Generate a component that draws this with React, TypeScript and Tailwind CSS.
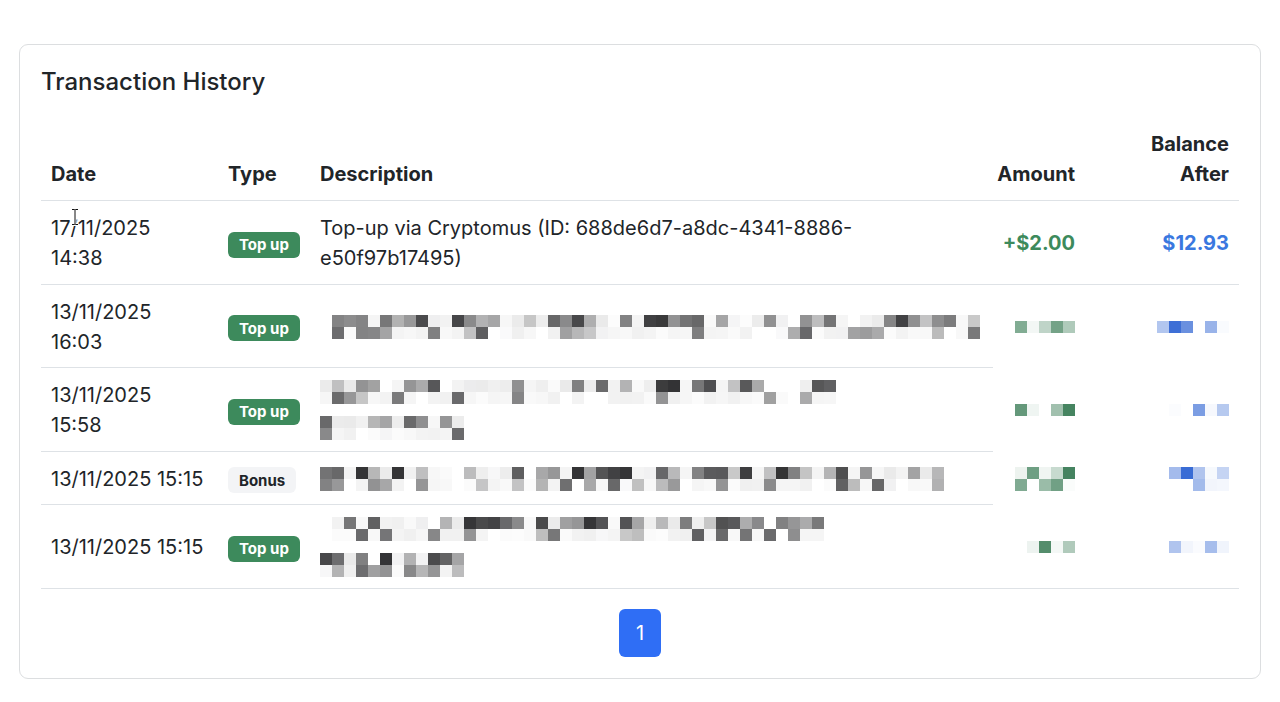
import React from "react";

type Palette = "gray" | "green" | "blue";

const BASES: Record<Palette, [number, number, number]> = {
  gray: [40, 40, 42],
  green: [58, 124, 86],
  blue: [44, 98, 210],
};

function rng(seed: number) {
  let a = seed >>> 0;
  return () => {
    a = (a + 0x6d2b79f5) >>> 0;
    let t = a;
    t = Math.imul(t ^ (t >>> 15), t | 1);
    t ^= t + Math.imul(t ^ (t >>> 7), t | 61);
    return ((t ^ (t >>> 14)) >>> 0) / 4294967296;
  };
}

function mix(base: [number, number, number], t: number) {
  const c = base.map((v) => Math.round(v + (255 - v) * t));
  return `rgb(${c[0]},${c[1]},${c[2]})`;
}

// pixelated (redacted) text block
function Mosaic({
  cols,
  rows = 2,
  palette = "gray",
  seed,
  lead = 0,
}: {
  cols: number;
  rows?: number;
  palette?: Palette;
  seed: number;
  lead?: number;
}) {
  const r = rng(seed);
  const size = 12;
  const cells: React.ReactNode[] = [];
  for (let y = 0; y < rows; y++) {
    for (let x = lead; x < cols; x++) {
      const v = r();
      const secondary = rows > 1 && y % 2 === 1;
      let t: number;
      if (secondary) {
        t = v < 0.7 ? 0.93 + r() * 0.07 : 0.25 + r() * 0.5;
      } else {
        t = v < 0.4 ? 0.9 + r() * 0.1 : 0.05 + r() * 0.7;
      }
      if (t > 0.985) continue;
      cells.push(
        <rect key={`${x}-${y}`} x={x * size} y={y * size} width={size} height={size} fill={mix(BASES[palette], t)} />,
      );
    }
  }
  return (
    <svg width={cols * size} height={rows * size} className="block">
      {cells}
    </svg>
  );
}

function Badge({ kind }: { kind: "topup" | "bonus" }) {
  if (kind === "bonus") {
    return (
      <span className="inline-flex h-[26px] items-center rounded-[6px] bg-[#f3f4f6] px-[11px] text-[15px] font-bold leading-none text-[#212529]">
        Bonus
      </span>
    );
  }
  return (
    <span className="inline-flex h-[26px] items-center rounded-[6px] bg-[#3d8a5c] px-[11px] text-[15px] font-bold leading-none text-white">
      Top up
    </span>
  );
}

type Row = {
  date: string[];
  type: "topup" | "bonus";
  desc: React.ReactNode;
  amount: React.ReactNode;
  balance: React.ReactNode;
  cutBorder?: boolean;
};

const rows: Row[] = [
  {
    date: ["17/11/2025", "14:38"],
    type: "topup",
    desc: (
      <>
        Top-up via Cryptomus (ID: 688de6d7-a8dc-4341-8886-
        <br />
        e50f97b17495)
      </>
    ),
    amount: <span className="font-bold text-[#3d8a5c]">+$2.00</span>,
    balance: <span className="font-bold text-[#3a78e0]">$12.93</span>,
  },
  {
    date: ["13/11/2025", "16:03"],
    type: "topup",
    desc: <Mosaic cols={55} seed={11} lead={1} />,
    amount: <Mosaic cols={5} rows={1} palette="green" seed={21} />,
    balance: <Mosaic cols={6} rows={1} palette="blue" seed={31} />,
    cutBorder: true,
  },
  {
    date: ["13/11/2025", "15:58"],
    type: "topup",
    desc: (
      <div className="flex flex-col gap-[12px]">
        <Mosaic cols={43} seed={12} />
        <Mosaic cols={12} seed={13} />
      </div>
    ),
    amount: <Mosaic cols={5} rows={1} palette="green" seed={22} />,
    balance: <Mosaic cols={5} rows={1} palette="blue" seed={32} />,
    cutBorder: true,
  },
  {
    date: ["13/11/2025 15:15"],
    type: "bonus",
    desc: <Mosaic cols={52} seed={14} />,
    amount: <Mosaic cols={5} rows={2} palette="green" seed={23} />,
    balance: <Mosaic cols={5} rows={2} palette="blue" seed={33} />,
    cutBorder: true,
  },
  {
    date: ["13/11/2025 15:15"],
    type: "topup",
    desc: (
      <div className="flex flex-col gap-[12px]">
        <Mosaic cols={42} seed={15} lead={1} />
        <Mosaic cols={12} seed={16} />
      </div>
    ),
    amount: <Mosaic cols={5} rows={1} palette="green" seed={24} />,
    balance: <Mosaic cols={5} rows={1} palette="blue" seed={34} />,
  },
];

export default function App() {
  return (
    <div className="min-h-screen bg-white px-[19px] pt-[44px] font-['Inter','Liberation_Sans',Arial,sans-serif] text-[#212529]">
      <div className="relative rounded-[9px] border border-[#dcdee0] p-[21px]">
        <h5 className="text-[24px] font-medium leading-[31px] text-[#212529]">Transaction History</h5>

        <table className="mt-[21px] w-full table-fixed border-collapse text-[20px] leading-[30px]">
          <colgroup>
            <col className="w-[177px]" />
            <col className="w-[92px]" />
            <col />
            <col className="w-[92px]" />
            <col className="w-[154px]" />
          </colgroup>
          <thead>
            <tr className="border-b border-[#dee2e6] align-bottom">
              <th className="px-[10px] pb-[11px] pt-[11px] text-left font-bold">Date</th>
              <th className="px-[10px] pb-[11px] pt-[11px] text-left font-bold">Type</th>
              <th className="px-[10px] pb-[11px] pt-[11px] text-left font-bold">Description</th>
              <th className="pb-[11px] pl-[4px] pr-[10px] pt-[11px] text-right font-bold">Amount</th>
              <th className="px-[10px] pb-[11px] pt-[11px] text-right font-bold">
                Balance
                <br />
                After
              </th>
            </tr>
          </thead>
          <tbody>
            {rows.map((r, i) => (
              <tr key={i} className="align-middle">
                <td className="border-b border-[#dee2e6] px-[10px] pb-[10.5px] pt-[12px]">
                  {r.date.map((d) => (
                    <div key={d} className="whitespace-nowrap">{d}</div>
                  ))}
                </td>
                <td className="border-b border-[#dee2e6] px-[10px] pb-[10.5px] pt-[12px]">
                  <Badge kind={r.type} />
                </td>
                <td className="border-b border-[#dee2e6] px-[10px] pb-[10.5px] pt-[12px]">{r.desc}</td>
                <td
                  className={`pb-[10.5px] pl-[4px] pr-[10px] pt-[12px] text-right ${
                    r.cutBorder ? "" : "border-b border-[#dee2e6]"
                  }`}
                >
                  <div className="flex justify-end">{r.amount}</div>
                </td>
                <td
                  className={`px-[6px] pb-[10.5px] pt-[12px] text-right ${
                    r.cutBorder ? "" : "border-b border-[#dee2e6]"
                  }`}
                >
                  <div className="flex justify-end pr-[4px]">{r.balance}</div>
                </td>
              </tr>
            ))}
          </tbody>
        </table>

        <div className="mt-[20px] flex justify-center">
          <button className="flex h-[48px] w-[42px] items-center justify-center rounded-[6px] bg-[#2f6ef5] text-[20px] text-white">
            1
          </button>
        </div>

        {/* text cursor */}
        <svg className="absolute left-[50px] top-[163px]" width="10" height="18" viewBox="0 0 10 18">
          <path
            d="M2 1.5h2.5L5 2l.5-.5H8M5 2v14M2 16.5h2.5L5 16l.5.5H8"
            fill="none"
            stroke="#fff"
            strokeWidth="3"
          />
          <path
            d="M2 1.5h2.5L5 2l.5-.5H8M5 2v14M2 16.5h2.5L5 16l.5.5H8"
            fill="none"
            stroke="#111"
            strokeWidth="1"
          />
        </svg>
      </div>
    </div>
  );
}
